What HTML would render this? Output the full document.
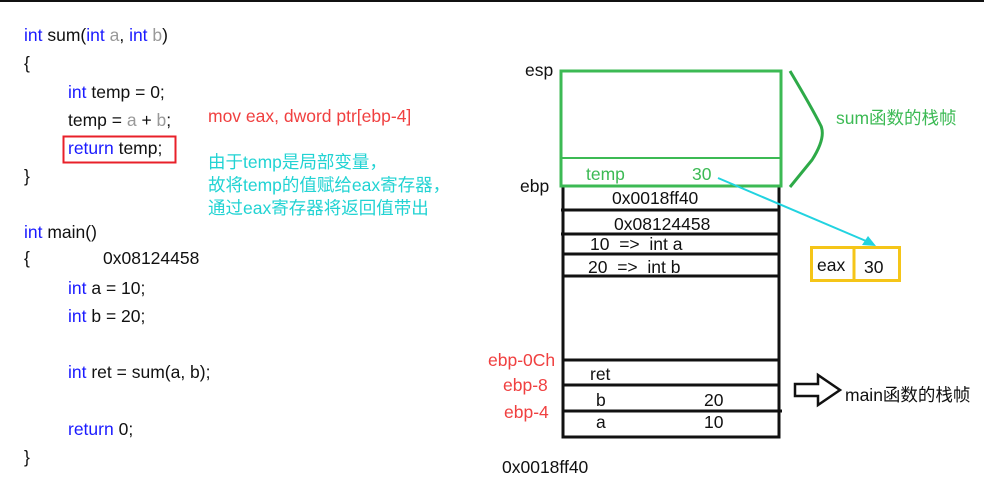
<!DOCTYPE html>
<html><head><meta charset="utf-8"><style>
html,body{margin:0;padding:0;background:#fff;width:984px;height:491px;overflow:hidden}
svg{display:block}
text{font-family:"Liberation Sans","Noto Sans CJK SC",sans-serif;font-size:17.5px;fill:#111}
.k{fill:#1a1aff}.g{fill:#999}.r{fill:#f04040}.c{fill:#22d3d3}.gr{fill:#3cba54}
</style></head><body>
<svg width="984" height="491" viewBox="0 0 984 491">
<line x1="0" y1="1" x2="984" y2="1" stroke="#111" stroke-width="2"/>
<text x="24" y="41"><tspan class="k">int</tspan> sum(<tspan class="k">int</tspan> <tspan class="g">a</tspan>, <tspan class="k">int</tspan> <tspan class="g">b</tspan>)</text>
<text x="24" y="69">{</text>
<text x="68" y="98"><tspan class="k">int</tspan> temp = 0;</text>
<text x="68" y="126">temp = <tspan class="g">a</tspan> + <tspan class="g">b</tspan>;</text>
<rect x="63.5" y="136.5" width="112" height="26" fill="none" stroke="#e8202a" stroke-width="2"/>
<text x="68" y="154"><tspan class="k">return</tspan> temp;</text>
<text x="24" y="182">}</text>
<text x="24" y="238"><tspan class="k">int</tspan> main()</text>
<text x="24" y="264">{</text>
<text x="103" y="264">0x08124458</text>
<text x="68" y="294"><tspan class="k">int</tspan> a = 10;</text>
<text x="68" y="322"><tspan class="k">int</tspan> b = 20;</text>
<text x="68" y="378"><tspan class="k">int</tspan> ret = sum(a, b);</text>
<text x="68" y="435"><tspan class="k">return</tspan> 0;</text>
<text x="24" y="463">}</text>
<text class="r" x="208" y="122">mov eax, dword ptr[ebp-4]</text>
<text class="c" x="208" y="168">由于temp是局部变量，</text>
<text class="c" x="208" y="191">故将temp的值赋给eax寄存器，</text>
<text class="c" x="208" y="214">通过eax寄存器将返回值带出</text>
<g fill="none" stroke="#111" stroke-width="3">
<rect x="563" y="186" width="216" height="251"/>
<line x1="561" y1="210" x2="779" y2="210"/>
<line x1="561" y1="234" x2="779" y2="234"/>
<line x1="563" y1="254" x2="779" y2="254"/>
<line x1="563" y1="276" x2="779" y2="276"/>
<line x1="563" y1="360" x2="779" y2="360"/>
<line x1="563" y1="385" x2="779" y2="385"/>
<line x1="563" y1="411" x2="782" y2="411"/>
</g>
<rect x="561" y="71" width="220" height="115" fill="none" stroke="#3cba54" stroke-width="3"/>
<line x1="561" y1="158" x2="781" y2="158" stroke="#3cba54" stroke-width="2"/>
<path d="M790 71 Q812 108 821 126 Q826 138 812 160 L790 187" fill="none" stroke="#2eaa48" stroke-width="3"/>
<text class="gr" x="586" y="180">temp</text>
<text class="gr" x="692" y="180">30</text>
<text class="gr" x="836" y="124">sum函数的栈帧</text>
<text x="525" y="76">esp</text>
<text x="520" y="192">ebp</text>
<text x="612" y="204">0x0018ff40</text>
<text x="614" y="230">0x08124458</text>
<text x="590" y="250" xml:space="preserve">10  =&gt;  int a</text>
<text x="588" y="273" xml:space="preserve">20  =&gt;  int b</text>
<text x="590" y="380">ret</text>
<text x="596" y="406">b</text><text x="704" y="406">20</text>
<text x="596" y="428">a</text><text x="704" y="428">10</text>
<text class="r" x="488" y="366">ebp-0Ch</text>
<text class="r" x="503" y="391">ebp-8</text>
<text class="r" x="504" y="418">ebp-4</text>
<text x="502" y="473">0x0018ff40</text>
<line x1="718" y1="178" x2="866" y2="241" stroke="#22d3e0" stroke-width="2"/>
<polygon points="876,246 862,245 868,236" fill="#22d3e0"/>
<rect x="811.5" y="247.5" width="88" height="33" fill="none" stroke="#f5c518" stroke-width="3"/>
<line x1="854" y1="247" x2="854" y2="281" stroke="#f5c518" stroke-width="3"/>
<text x="817" y="271">eax</text>
<text x="864" y="273">30</text>
<path d="M795 384 H818 V375 L840 390 L818 405 V396 H795 Z" fill="none" stroke="#111" stroke-width="2.5"/>
<text x="845" y="401">main函数的栈帧</text>
</svg>
</body></html>
